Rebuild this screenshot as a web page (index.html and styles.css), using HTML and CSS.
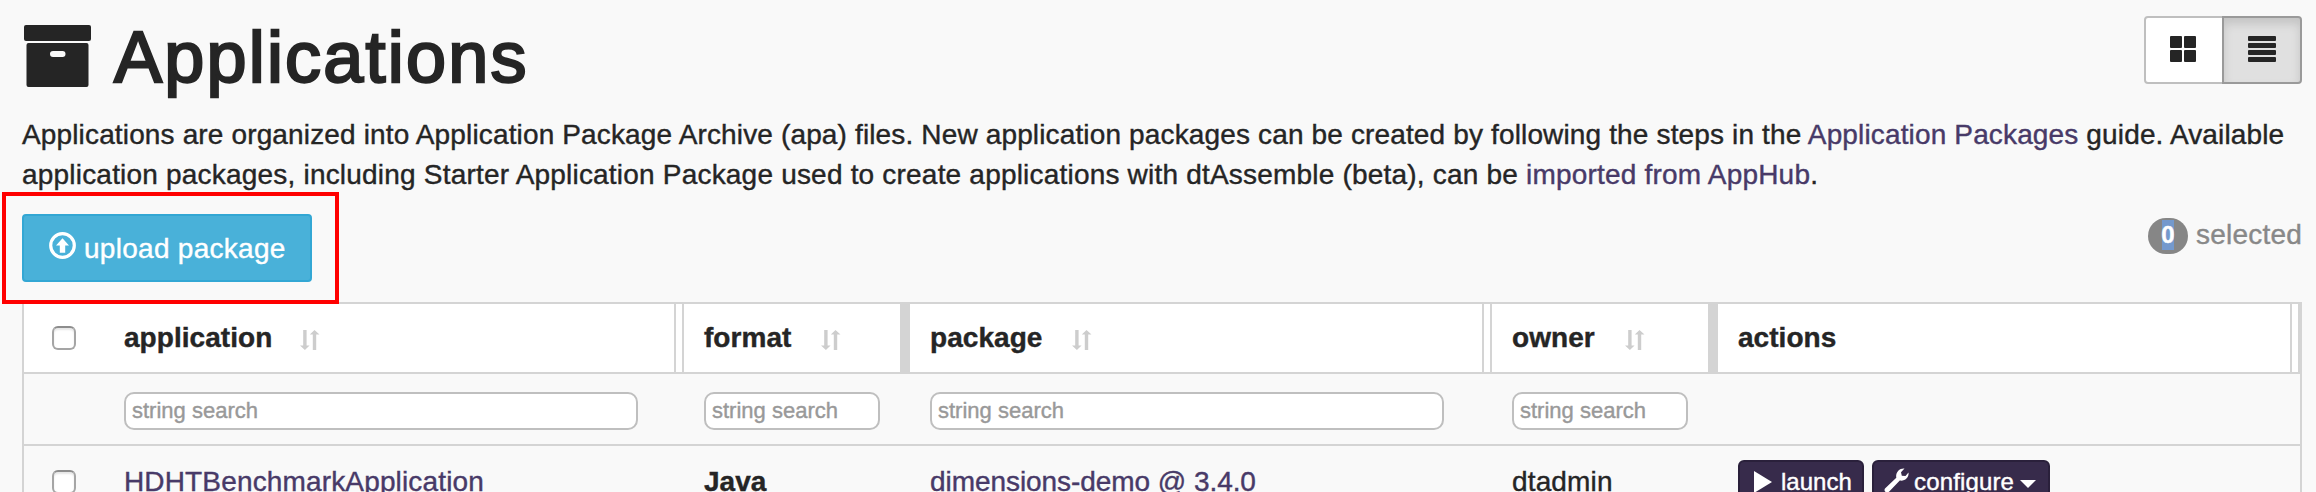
FILE: index.html
```html
<!DOCTYPE html>
<html lang="en">
<head>
<meta charset="utf-8">
<title>Applications</title>
<link rel="stylesheet" href="styles.css">
</head>
<body>
<svg class="sprite" aria-hidden="true">
  <symbol id="sort" viewBox="0 0 20 20"><path d="M3.2 0h3.4v15.500H9.600L4.900 20 0 15.500h3.200zM12.800 20h3.400V4.500H19.500L14.500 0 9.800 4.500h3z"/></symbol>
</svg>
<main class="page">
  <header class="top">
    <h1 class="title">
      <svg class="archive" viewBox="0 0 67 62"><rect width="67" height="16" rx="2"/><path fill-rule="evenodd" d="M4.500 18h58a2 2 0 0 1 2 2v40a2 2 0 0 1-2 2h-58a2 2 0 0 1-2-2V20a2 2 0 0 1 2-2zM29 26a3 3 0 0 0 0 6h9.500a3 3 0 0 0 0-6z"/></svg>
      <span class="title-text">Applications</span>
    </h1>
    <div class="views">
      <button class="view"><svg width="26" height="26" viewBox="0 0 26 26"><rect width="12" height="12" rx="1"/><rect x="14" width="12" height="12" rx="1"/><rect y="14" width="12" height="12" rx="1"/><rect x="14" y="14" width="12" height="12" rx="1"/></svg></button>
      <button class="view view-on"><svg width="28" height="26" viewBox="0 0 28 26"><rect width="28" height="5" rx="1"/><rect y="7" width="28" height="5" rx="1"/><rect y="14" width="28" height="5" rx="1"/><rect y="21" width="28" height="5" rx="1"/></svg></button>
    </div>
  </header>
  <p class="intro"><span class="line1">Applications are organized into Application Package Archive (apa) files. New application packages can be created by following the steps in the <a>Application Packages</a> guide. Available</span><br><span class="line2">application packages, including Starter Application Package used to create applications with dtAssemble (beta), can be <a>imported from AppHub</a>.</span></p>
  <div class="toolbar">
    <button class="upload"><svg width="27" height="27" viewBox="0 0 27 27"><circle cx="13.500" cy="13.500" r="11.800" fill="none" stroke="#fff" stroke-width="3.200"/><path d="M13.500 6.200l6.500 7.300h-3.800v7.300h-5.400v-7.300H7z"/></svg><span>upload package</span></button>
    <div class="selected"><span class="badge"><span class="count">0</span></span><span class="selected-label">selected</span></div>
  </div>
  <div class="grid">
    <div class="row head">
      <div class="cell check"><i class="box"></i></div>
      <div class="cell">application<svg class="sort sort-wide"><use href="#sort"/></svg><i class="resize"></i></div>
      <div class="cell">format<svg class="sort"><use href="#sort"/></svg><i class="resize solid"></i></div>
      <div class="cell">package<svg class="sort"><use href="#sort"/></svg><i class="resize"></i></div>
      <div class="cell">owner<svg class="sort"><use href="#sort"/></svg><i class="resize solid"></i></div>
      <div class="cell">actions<i class="resize"></i></div>
    </div>
    <div class="row filters">
      <div class="cell"></div>
      <div class="cell"><input class="search" placeholder="string search"></div>
      <div class="cell"><input class="search" placeholder="string search"></div>
      <div class="cell"><input class="search" placeholder="string search"></div>
      <div class="cell"><input class="search" placeholder="string search"></div>
      <div class="cell"></div>
    </div>
    <div class="row data">
      <div class="cell check"><i class="box"></i></div>
      <div class="cell spaced"><a>HDHTBenchmarkApplication</a></div>
      <div class="cell"><b>Java</b></div>
      <div class="cell tight"><a>dimensions-demo @ 3.4.0</a></div>
      <div class="cell spaced">dtadmin</div>
      <div class="cell actions">
        <button class="act launch"><svg width="18" height="22" viewBox="0 0 18 22"><path d="M0 0l18 11L0 22z"/></svg><span>launch</span></button>
        <button class="act configure"><svg width="25" height="25" viewBox="0 0 25 25"><path d="M1 20.500L12.300 9.800C11.300 4.500 15 0 20.500.4L17 4.200l.8 3.500 3.700.4L24.500 4.500C25.200 9.500 21 13.500 15.800 12.600L5 23.800C2.500 25.500-.7 23 1 20.500z"/></svg><span>configure</span><i class="caret"></i></button>
      </div>
    </div>
  </div>
  <div class="highlight"></div>
</main>
</body>
</html>
```

FILE: styles.css
```css
* { box-sizing: border-box; }
body {
  margin: 0;
  height: 492px;
  overflow: hidden;
  background: #f9f9f9;
  color: #252525;
  font: 28px/40px "Liberation Sans", Arial, sans-serif;
  white-space: nowrap;
  -webkit-text-stroke: 0.4px;
}
.sprite { display: none; }
svg { fill: currentColor; flex: none; display: block; }
button { font: inherit; margin: 0; }
a { color: #483a68; }
.page {
  position: relative;
  height: 492px;
  padding: 16px 14px 0 22px;
  overflow: hidden;
}
.top { display: flex; justify-content: space-between; height: 99px; }
.title {
  display: flex;
  gap: 23px;
  margin: 0;
  padding: 9px 0 0 2px;
  font-size: 72px;
  font-weight: 400;
  line-height: 80px;
}
.archive { width: 67px; height: 62px; }
.title-text { margin-top: -8px; letter-spacing: 2.2px; -webkit-text-stroke: 2.4px; }
.views { display: flex; height: 68px; }
.view {
  width: 80px;
  padding: 0 2px 2px 0;
  display: flex;
  align-items: center;
  justify-content: center;
  color: #252525;
  background: #fff;
  border: 2px solid #bfbfbf;
  border-radius: 4px 0 0 4px;
}
.view-on {
  margin-left: -2px;
  padding-right: 0;
  background: #e0e0e0;
  border-color: #9a9a9a;
  border-radius: 0 4px 4px 0;
  box-shadow: inset 0 6px 10px rgba(0, 0, 0, 0.125);
}
.intro { margin: 0 0 16px; height: 83px; }
.line1 { letter-spacing: 0.145px; }
.line2 { letter-spacing: 0.2px; }
.toolbar { display: flex; justify-content: space-between; height: 88px; }
.upload {
  display: flex;
  align-items: flex-start;
  gap: 8px;
  width: 290px;
  height: 68px;
  padding: 16px 0 0 25px;
  color: #fff;
  background: #49b1d9;
  border: 2px solid #33a7d4;
  border-radius: 4px;
}
.upload span { margin-top: -3px; letter-spacing: 0.28px; }
.selected { display: flex; gap: 8px; height: 40px; color: #888; letter-spacing: 0.2px; }
.selected-label { padding-top: 1px; }
.badge {
  display: flex;
  align-items: center;
  justify-content: center;
  width: 40px;
  height: 36px;
  margin-top: 4px;
  border-radius: 18px;
  background: #868686;
  color: #fff;
  font-size: 24px;
  font-weight: 700;
}
.count { line-height: 30px; width: 12px; margin-bottom: 2px; background: #7499cd; display: flex; justify-content: center; }
.grid { border: 2px solid #d4d4d4; border-bottom: 0; height: 200px; }
.row {
  display: grid;
  grid-template-columns: 80px 580px 226px 582px 226px 582px;
  border-bottom: 2px solid #d4d4d4;
}
.cell { position: relative; display: flex; align-items: center; padding: 0 20px; }
.head { height: 70px; background: #fff; font-weight: 700; letter-spacing: 0.05px; }
.check { padding-left: 28px; }
.box {
  width: 24px;
  height: 24px;
  border: 2px solid #a5a5a5;
  border-top-color: #8d8d8d;
  border-radius: 6px;
  background: #fff;
  box-shadow: inset 0 2px 2px #e6e6e6;
}
.sort { width: 20px; height: 20px; margin: 4px 0 0 30px; color: #cdcdcd; }
.sort-wide { margin-left: 28px; }
.resize {
  position: absolute;
  right: 0;
  top: 0;
  bottom: 0;
  width: 10px;
  border: solid #d4d4d4;
  border-width: 0 2px;
}
.solid { background: #d4d4d4; }
.filters { height: 72px; }
.search {
  width: 100%;
  height: 38px;
  margin: 0;
  padding: 0 0 0 6px;
  font: 22px "Liberation Sans", Arial, sans-serif;
  border: 2px solid #bfbfbf;
  border-radius: 10px;
  background: #fff;
}
.filters .cell { padding: 4px 30px 0 20px; }
.filters .cell:nth-child(2) { padding-right: 46px; }
.filters .cell:nth-child(4) { padding-right: 48px; }
.search::placeholder { color: #999; opacity: 1; }
.data { height: 72px; border: 0; }
.spaced { letter-spacing: 0.15px; }
.tight { letter-spacing: -0.06px; }
.actions { align-items: flex-start; gap: 8px; padding-top: 14px; }
.act {
  display: flex;
  align-items: flex-start;
  height: 44px;
  color: #fff;
  background: #372b4b;
  border: 2px solid #2a203b;
  border-radius: 6px;
  font-size: 24px;
  padding: 0;
}
.launch { width: 126px; padding-left: 14px; gap: 9px; }
.launch svg { margin-top: 9px; }
.configure { width: 178px; padding-left: 10px; gap: 5px; letter-spacing: 0.15px; }
.configure svg { margin-top: 6px; }
.caret { margin: 18px 0 0 1px; border: 8px solid transparent; border-top-color: #fff; border-bottom: 0; }
.highlight {
  position: absolute;
  left: 2px;
  top: 192px;
  width: 337px;
  height: 112px;
  border: 4px solid #f00;
}
```
